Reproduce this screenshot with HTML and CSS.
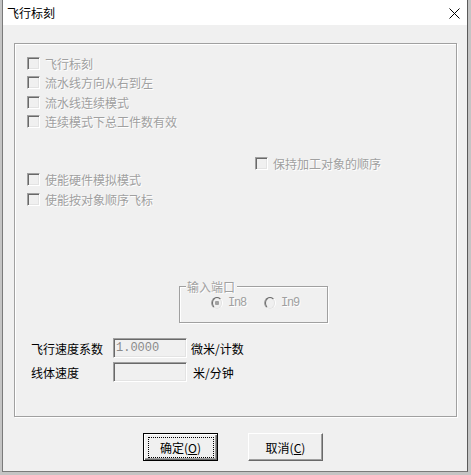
FILE: index.html
```html
<!DOCTYPE html>
<html lang="zh-CN">
<head>
  <meta charset="UTF-8">
  <title>飞行标刻</title>
  <link rel="stylesheet" href="styles.css">
</head>
<body>
  <div class="win">
    <div class="titlebar">
      <span class="title">飞行标刻</span>
      <svg class="close" width="11" height="11" viewBox="0 0 11 11">
        <path d="M0.5 0.5L10.5 10.5M10.5 0.5L0.5 10.5" stroke="#000" stroke-width="1" fill="none"/>
      </svg>
    </div>
    <div class="client">
      <div class="group">
        <div class="row r1"><span class="chk"></span><span class="dis">飞行标刻</span></div>
        <div class="row r2"><span class="chk"></span><span class="dis">流水线方向从右到左</span></div>
        <div class="row r3"><span class="chk"></span><span class="dis">流水线连续模式</span></div>
        <div class="row r4"><span class="chk"></span><span class="dis">连续模式下总工件数有效</span></div>
        <div class="row r5"><span class="chk"></span><span class="dis">保持加工对象的顺序</span></div>
        <div class="row r6"><span class="chk"></span><span class="dis">使能硬件模拟模式</span></div>
        <div class="row r7"><span class="chk"></span><span class="dis">使能按对象顺序飞标</span></div>

        <div class="port">
          <span class="port-title dis">输入端口</span>
          <div class="radios">
            <span class="radio on"></span><span class="dis latin in8">In8</span>
            <span class="radio"></span><span class="dis latin">In9</span>
          </div>
        </div>

        <div class="field f1">
          <span class="lbl">飞行速度系数</span>
          <span class="edit">1.0000</span>
          <span class="unit">微米/计数</span>
        </div>
        <div class="field f2">
          <span class="lbl">线体速度</span>
          <span class="edit"></span>
          <span class="unit u2">米/分钟</span>
        </div>
      </div>

      <div class="buttons">
        <div class="btn default"><span class="focus">确定(<u>O</u>)</span></div>
        <div class="btn cancel">取消(<u>C</u>)</div>
      </div>
    </div>
  </div>
</body>
</html>
```

FILE: styles.css
```css
*{
  margin: 0;
  padding: 0;
  box-sizing: border-box;
}
body{
  width: 471px;
  height: 475px;
  overflow: hidden;
  background: #c4c4c4;
  font-family: "Noto Sans CJK SC", "DejaVu Sans", sans-serif;
  font-size: 12px;
  line-height: 13px;
  color: #000;
}

/* 窗口 */
.win{
  margin-left: 2px;
  width: 466px;
  height: 472px;
  border: 1px solid #7a7a7a;
  border-top: none;
  border-right-color: #5a5a5a;
  background: #f0f0f0;
}
.titlebar{
  height: 25px;
  background: #fff;
  display: flex;
  align-items: center;
  padding-left: 4px;
}
.title{
  font-size: 12px;
  line-height: 14px;
}
.close{
  margin-left: auto;
  margin-right: 7px;
  margin-top: 1px;
}
.client{
  height: 446px;
  padding-top: 18px;
}

/* 大框 */
.group{
  margin-left: 11px;
  width: 443px;
  height: 374px;
  border: 1px solid #a0a0a0;
  box-shadow: inset 1px 1px 0 #fff, 1px 1px 0 #fff;
  padding-top: 13px;
}
.row{
  display: flex;
  align-items: center;
  height: 13px;
  margin-left: 12px;
}
.r2{ margin-top: 6px; }
.r3{ margin-top: 7px; }
.r4{ margin-top: 6px; }
.r5{ margin-top: 29px; margin-left: 240px; }
.r6{ margin-top: 3px; }
.r7{ margin-top: 7px; }

.chk{
  width: 13px;
  height: 13px;
  flex: none;
  border: 1px solid;
  border-color: #a0a0a0 #fff #fff #a0a0a0;
  box-shadow: inset 1px 1px 0 #696969, inset -1px -1px 0 #e3e3e3;
  background: #f0f0f0;
  margin-right: 5px;
}
.dis{
  color: #a0a0a0;
  text-shadow: 1px 1px 0 #fff;
  white-space: nowrap;
}
.latin{
  font-family: "Liberation Mono", monospace;
  letter-spacing: -1.2px;
}

/* 输入端口 */
.port{
  margin-top: 80px;
  margin-left: 164px;
  width: 149px;
  height: 37px;
  border: 1px solid #a0a0a0;
  box-shadow: inset 1px 1px 0 #fff, 1px 1px 0 #fff;
}
.port-title{
  display: table;
  margin-top: -7px;
  margin-left: 6px;
  padding: 0 2px 0 1px;
  background: #f0f0f0;
}
.radios{
  display: flex;
  align-items: center;
  margin-top: 4px;
  margin-left: 31px;
  height: 12px;
}
.radio{
  width: 12px;
  height: 12px;
  flex: none;
  border-radius: 50%;
  border: 1px solid;
  border-color: #a0a0a0 #fff #fff #a0a0a0;
  background: #f0f0f0;
  margin-right: 5px;
  display: flex;
  align-items: center;
  justify-content: center;
}
.radio::before{
  content: '';
  width: 10px;
  height: 10px;
  border-radius: 50%;
  border: 1px solid;
  border-color: #696969 #e3e3e3 #e3e3e3 #696969;
}
.radio.on{
  background: radial-gradient(circle, #a0a0a0 0 2px, #f0f0f0 2.5px);
}
.in8{
  margin-right: 18px;
}

/* 速度 */
.field{
  display: flex;
  align-items: center;
  height: 20px;
  margin-left: 16px;
}
.f1{ margin-top: 15px; }
.f2{ margin-top: 4px; }
.lbl{
  width: 82px;
}
.edit{
  width: 74px;
  height: 20px;
  border: 1px solid;
  border-color: #a0a0a0 #fff #fff #a0a0a0;
  box-shadow: inset 1px 1px 0 #696969, inset -1px -1px 0 #e3e3e3;
  background: #f0f0f0;
  color: #8a8a8a;
  font-family: "Liberation Mono", monospace;
  font-size: 12px;
  line-height: 16px;
  padding: 1px 0 0 2px;
}
.unit{
  margin-left: 4px;
}
.u2{
  margin-left: 6px;
}

/* 按钮 */
.buttons{
  display: flex;
  margin-top: 16px;
  margin-left: 140px;
}
.btn{
  width: 75px;
  height: 28px;
  display: flex;
  align-items: center;
  justify-content: center;
  border: 1px solid;
  border-color: #fff #696969 #696969 #fff;
  box-shadow: inset -1px -1px 0 #a0a0a0;
  background: #f0f0f0;
}
.btn u{
  text-underline-offset: 1px;
}
.default{
  border: 1px solid #000;
  box-shadow: inset 1px 1px 0 #fff, inset -1px -1px 0 #696969, inset -2px -2px 0 #a0a0a0;
}
.focus{
  width: 66px;
  height: 21px;
  display: flex;
  align-items: center;
  justify-content: center;
  border: 1px dotted #000;
}
.cancel{
  margin-left: 30px;
}
```
